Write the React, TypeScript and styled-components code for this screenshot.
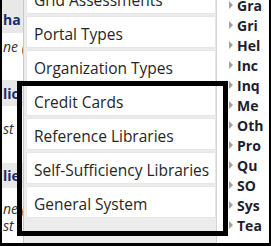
import React from "react";
import styled, { createGlobalStyle } from "styled-components";

const GlobalStyle = createGlobalStyle`
	html, body {
		margin: 0;
		padding: 0;
		background: #ffffff;
	}
`;

const Frame = styled.div`
	position: relative;
	box-sizing: border-box;
	width: 271px;
	height: 246px;
	display: flex;
	overflow: hidden;
	border-left: 2px solid #000;
	border-right: 2px solid #000;
	border-bottom: 3px solid #000;
	background: #ffffff;
	font-family: "Open Sans", "Liberation Sans", sans-serif;
`;

const PageStrip = styled.div`
	width: 21px;
	flex: none;
	overflow: hidden;
	display: flex;
	flex-direction: column;
	white-space: nowrap;
`;

const PageHeader = styled.div<{ $height: number; $pad?: number }>`
	box-sizing: border-box;
	height: ${({ $height }) => $height}px;
	flex: none;
	display: flex;
	align-items: flex-end;
	padding-bottom: ${({ $pad = 4 }) => $pad}px;
	background: #e8e8e8;
	color: #1b2a70;
	font-weight: 700;
	font-size: 14px;
	line-height: 18px;
	padding-left: 1px;
`;

const PageLine = styled.div<{ $height: number }>`
	height: ${({ $height }) => $height}px;
	flex: none;
	color: #333;
	font-style: italic;
	font-size: 14px;
	line-height: ${({ $height }) => $height}px;
	padding-left: 1px;
	overflow: hidden;
`;

const Menu = styled.div`
	width: 194px;
	flex: none;
	box-sizing: border-box;
	border-left: 1px solid #c8c8c8;
	border-right: 1px solid #d4d4d4;
	background: #ececec;
	padding: 0 0 0 2px;
	overflow: hidden;
`;

const MenuList = styled.div`
	display: flex;
	flex-direction: column;
	gap: 2px;
	margin-top: -18px;
`;

const MenuItem = styled.div`
	box-sizing: border-box;
	height: 32px;
	width: 190px;
	padding: 3px 0 0 7px;
	display: flex;
	align-items: center;
	background: #ffffff;
	border: 1px solid #e6e6e6;
	color: #262626;
	font-size: 15.5px;
	white-space: nowrap;
	overflow: hidden;
`;

const SidePanel = styled.div`
	flex: 1;
	overflow: hidden;
	background: #ffffff;
	padding-left: 12px;
`;

const SideList = styled.div`
	display: flex;
	flex-direction: column;
	margin-top: -5px;
`;

const SideItem = styled.div`
	height: 20px;
	display: flex;
	align-items: center;
	gap: 4px;
	color: #1e1e2c;
	font-weight: 700;
	font-size: 14px;
	white-space: nowrap;
`;

const Arrow = styled.span`
	width: 0;
	height: 0;
	flex: none;
	border-top: 4px solid transparent;
	border-bottom: 4px solid transparent;
	border-left: 4px solid #a0a0a0;
`;

const Highlight = styled.div`
	position: absolute;
	left: 15px;
	top: 81px;
	width: 211px;
	height: 155px;
	box-sizing: border-box;
	border: 5px solid #000;
	pointer-events: none;
`;

const menuItems = [
	"Grid Assessments",
	"Portal Types",
	"Organization Types",
	"Credit Cards",
	"Reference Libraries",
	"Self-Sufficiency Libraries",
	"General System",
];

const sideItems = ["Gra", "Gri", "Hel", "Inc", "Inq", "Me", "Oth", "Pro", "Qu", "SO", "Sys", "Tea"];

const App = () => (
	<>
		<GlobalStyle />
		<Frame>
			<PageStrip>
				<PageHeader $height={33}>ha</PageHeader>
				<PageLine $height={28}>ne (</PageLine>
				<PageLine $height={19} />
				<PageHeader $height={26} $pad={3}>lic</PageHeader>
				<PageLine $height={13} />
				<PageLine $height={20}>st</PageLine>
				<PageLine $height={24} />
				<PageHeader $height={25} $pad={3}>lie</PageHeader>
				<PageLine $height={12} />
				<PageLine $height={18}>ne (</PageLine>
				<PageLine $height={16}>st</PageLine>
				<PageLine $height={14}>...</PageLine>
			</PageStrip>
			<Menu>
				<MenuList>
					{menuItems.map((item) => (
						<MenuItem key={item}>{item}</MenuItem>
					))}
				</MenuList>
			</Menu>
			<SidePanel>
				<SideList>
					{sideItems.map((item) => (
						<SideItem key={item}>
							<Arrow />
							{item}
						</SideItem>
					))}
				</SideList>
			</SidePanel>
			<Highlight />
		</Frame>
	</>
);

export default App;
